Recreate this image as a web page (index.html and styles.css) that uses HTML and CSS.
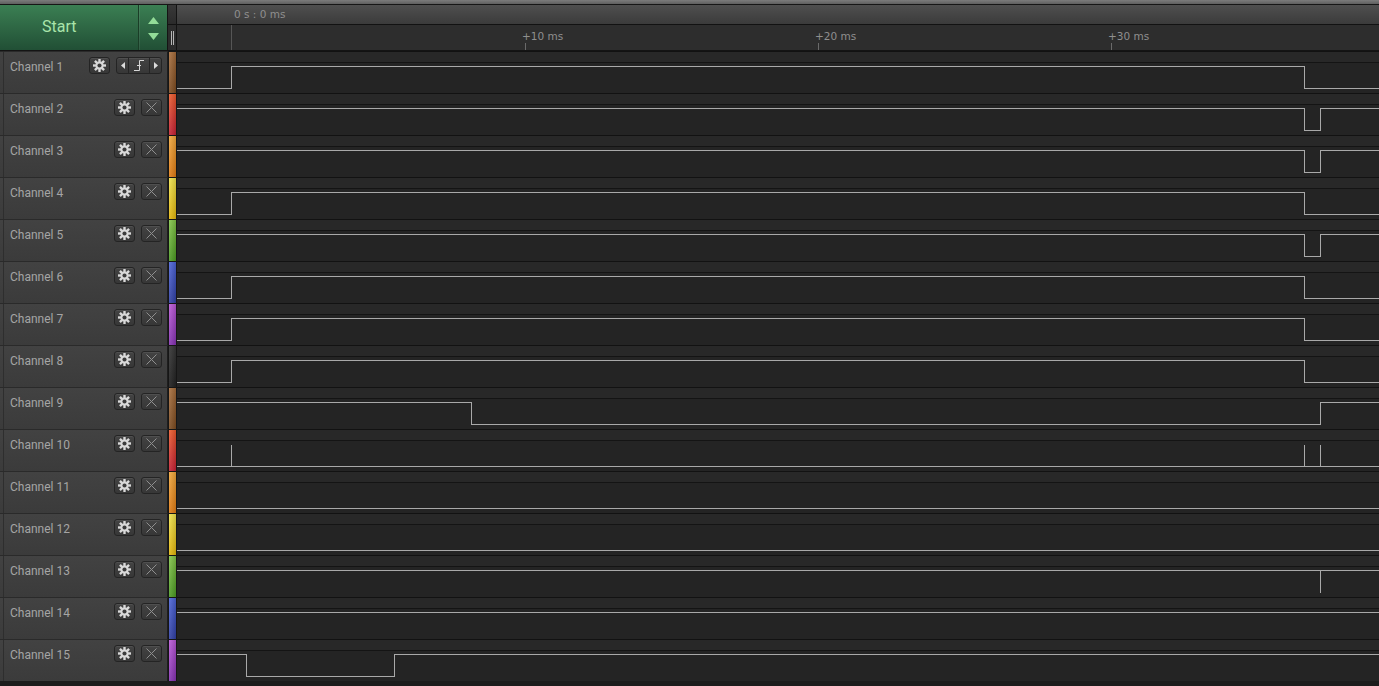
FILE: index.html
```html
<!DOCTYPE html>
<html>
<head>
<meta charset="utf-8">
<title>Logic</title>
<link rel="stylesheet" href="styles.css">
</head>
<body>
<div class="app">
  <div class="topbar"></div>
  <div class="header">
    <div class="start">
      <div class="start-label">Start</div>
      <div class="start-arrows">
        <svg width="11" height="7" viewBox="0 0 11 7"><path d="M5.5 0 L11 7 L0 7 Z" fill="#93dc98"/></svg>
        <svg width="11" height="7" viewBox="0 0 11 7"><path d="M0 0 L11 0 L5.5 7 Z" fill="#93dc98"/></svg>
      </div>
    </div>
    <div class="grip">
      <div class="grip-top"></div>
      <div class="grip-bottom"><span class="grip-bar"></span><span class="grip-bar"></span></div>
    </div>
    <div class="ruler">
      <div class="ruler-top"><span class="cursor-label" style="left:57px">0 s : 0 ms</span></div>
      <div class="ruler-bottom">
        <span class="cursor-line" style="left:54px"></span>
        <span class="tick-label" style="left:345px">+10 ms</span><span class="tick" style="left:348px"></span>
        <span class="tick-label" style="left:638px">+20 ms</span><span class="tick" style="left:641px"></span>
        <span class="tick-label" style="left:931px">+30 ms</span><span class="tick" style="left:934px"></span>
      </div>
    </div>
  </div>

  <div class="rows">
    <div class="row">
      <div class="label"><div class="label-inner">
        <span class="name">Channel 1</span>
        <span class="btn"><svg class="gear" width="13" height="13" viewBox="0 0 12 12"><use href="#gear"/></svg></span>
        <span class="nav">
          <span class="nav-l"><svg width="4" height="7" viewBox="0 0 4 7"><path d="M4 0 L0 3.5 L4 7 Z" fill="#dcdcdc"/></svg></span>
          <span class="nav-m"><svg width="12" height="11" viewBox="0 0 12 11"><path d="M1 10.5 H6.5 V0.5 H11 M4 5.5 H8" fill="none" stroke="#d6d6d6" stroke-width="1"/></svg></span>
          <span class="nav-r"><svg width="4" height="7" viewBox="0 0 4 7"><path d="M0 0 L4 3.5 L0 7 Z" fill="#dcdcdc"/></svg></span>
        </span>
      </div></div>
      <div class="strip c-brown"></div>
      <div class="wave"><div class="band"></div><svg class="trace" width="1202" height="29" viewBox="0 0 1202 29"><path d="M0 25.5 H54.5 V3.5 H1127.5 V25.5 H1202"/></svg></div>
    </div>

    <div class="row">
      <div class="label"><div class="label-inner"><span class="name">Channel 2</span><span class="btn"><svg class="gear" width="13" height="13" viewBox="0 0 12 12"><use href="#gear"/></svg></span><span class="btn"><svg width="11" height="11" viewBox="0 0 11 11"><path d="M0.5 0.5 L10.5 10.5 M10.5 0.5 L0.5 10.5" stroke="#8f8f8f" stroke-width="1"/></svg></span></div></div>
      <div class="strip c-red"></div>
      <div class="wave"><div class="band"></div><svg class="trace" width="1202" height="29" viewBox="0 0 1202 29"><path d="M0 3.5 H1127.5 V25.5 H1143.5 V3.5 H1202"/></svg></div>
    </div>

    <div class="row">
      <div class="label"><div class="label-inner"><span class="name">Channel 3</span><span class="btn"><svg class="gear" width="13" height="13" viewBox="0 0 12 12"><use href="#gear"/></svg></span><span class="btn"><svg width="11" height="11" viewBox="0 0 11 11"><path d="M0.5 0.5 L10.5 10.5 M10.5 0.5 L0.5 10.5" stroke="#8f8f8f" stroke-width="1"/></svg></span></div></div>
      <div class="strip c-orange"></div>
      <div class="wave"><div class="band"></div><svg class="trace" width="1202" height="29" viewBox="0 0 1202 29"><path d="M0 3.5 H1127.5 V25.5 H1143.5 V3.5 H1202"/></svg></div>
    </div>

    <div class="row">
      <div class="label"><div class="label-inner"><span class="name">Channel 4</span><span class="btn"><svg class="gear" width="13" height="13" viewBox="0 0 12 12"><use href="#gear"/></svg></span><span class="btn"><svg width="11" height="11" viewBox="0 0 11 11"><path d="M0.5 0.5 L10.5 10.5 M10.5 0.5 L0.5 10.5" stroke="#8f8f8f" stroke-width="1"/></svg></span></div></div>
      <div class="strip c-yellow"></div>
      <div class="wave"><div class="band"></div><svg class="trace" width="1202" height="29" viewBox="0 0 1202 29"><path d="M0 25.5 H54.5 V3.5 H1127.5 V25.5 H1202"/></svg></div>
    </div>

    <div class="row">
      <div class="label"><div class="label-inner"><span class="name">Channel 5</span><span class="btn"><svg class="gear" width="13" height="13" viewBox="0 0 12 12"><use href="#gear"/></svg></span><span class="btn"><svg width="11" height="11" viewBox="0 0 11 11"><path d="M0.5 0.5 L10.5 10.5 M10.5 0.5 L0.5 10.5" stroke="#8f8f8f" stroke-width="1"/></svg></span></div></div>
      <div class="strip c-green"></div>
      <div class="wave"><div class="band"></div><svg class="trace" width="1202" height="29" viewBox="0 0 1202 29"><path d="M0 3.5 H1127.5 V25.5 H1143.5 V3.5 H1202"/></svg></div>
    </div>

    <div class="row">
      <div class="label"><div class="label-inner"><span class="name">Channel 6</span><span class="btn"><svg class="gear" width="13" height="13" viewBox="0 0 12 12"><use href="#gear"/></svg></span><span class="btn"><svg width="11" height="11" viewBox="0 0 11 11"><path d="M0.5 0.5 L10.5 10.5 M10.5 0.5 L0.5 10.5" stroke="#8f8f8f" stroke-width="1"/></svg></span></div></div>
      <div class="strip c-blue"></div>
      <div class="wave"><div class="band"></div><svg class="trace" width="1202" height="29" viewBox="0 0 1202 29"><path d="M0 25.5 H54.5 V3.5 H1127.5 V25.5 H1202"/></svg></div>
    </div>

    <div class="row">
      <div class="label"><div class="label-inner"><span class="name">Channel 7</span><span class="btn"><svg class="gear" width="13" height="13" viewBox="0 0 12 12"><use href="#gear"/></svg></span><span class="btn"><svg width="11" height="11" viewBox="0 0 11 11"><path d="M0.5 0.5 L10.5 10.5 M10.5 0.5 L0.5 10.5" stroke="#8f8f8f" stroke-width="1"/></svg></span></div></div>
      <div class="strip c-purple"></div>
      <div class="wave"><div class="band"></div><svg class="trace" width="1202" height="29" viewBox="0 0 1202 29"><path d="M0 25.5 H54.5 V3.5 H1127.5 V25.5 H1202"/></svg></div>
    </div>

    <div class="row">
      <div class="label"><div class="label-inner"><span class="name">Channel 8</span><span class="btn"><svg class="gear" width="13" height="13" viewBox="0 0 12 12"><use href="#gear"/></svg></span><span class="btn"><svg width="11" height="11" viewBox="0 0 11 11"><path d="M0.5 0.5 L10.5 10.5 M10.5 0.5 L0.5 10.5" stroke="#8f8f8f" stroke-width="1"/></svg></span></div></div>
      <div class="strip c-black"></div>
      <div class="wave"><div class="band"></div><svg class="trace" width="1202" height="29" viewBox="0 0 1202 29"><path d="M0 25.5 H54.5 V3.5 H1127.5 V25.5 H1202"/></svg></div>
    </div>

    <div class="row">
      <div class="label"><div class="label-inner"><span class="name">Channel 9</span><span class="btn"><svg class="gear" width="13" height="13" viewBox="0 0 12 12"><use href="#gear"/></svg></span><span class="btn"><svg width="11" height="11" viewBox="0 0 11 11"><path d="M0.5 0.5 L10.5 10.5 M10.5 0.5 L0.5 10.5" stroke="#8f8f8f" stroke-width="1"/></svg></span></div></div>
      <div class="strip c-brown"></div>
      <div class="wave"><div class="band"></div><svg class="trace" width="1202" height="29" viewBox="0 0 1202 29"><path d="M0 3.5 H294.5 V25.5 H1143.5 V3.5 H1202"/></svg></div>
    </div>

    <div class="row">
      <div class="label"><div class="label-inner"><span class="name">Channel 10</span><span class="btn"><svg class="gear" width="13" height="13" viewBox="0 0 12 12"><use href="#gear"/></svg></span><span class="btn"><svg width="11" height="11" viewBox="0 0 11 11"><path d="M0.5 0.5 L10.5 10.5 M10.5 0.5 L0.5 10.5" stroke="#8f8f8f" stroke-width="1"/></svg></span></div></div>
      <div class="strip c-red"></div>
      <div class="wave"><div class="band"></div><svg class="trace" width="1202" height="29" viewBox="0 0 1202 29"><path d="M0 25.5 H1202 M54.5 25.5 V3.5 M1127.5 25.5 V3.5 M1143.5 25.5 V3.5"/></svg></div>
    </div>

    <div class="row">
      <div class="label"><div class="label-inner"><span class="name">Channel 11</span><span class="btn"><svg class="gear" width="13" height="13" viewBox="0 0 12 12"><use href="#gear"/></svg></span><span class="btn"><svg width="11" height="11" viewBox="0 0 11 11"><path d="M0.5 0.5 L10.5 10.5 M10.5 0.5 L0.5 10.5" stroke="#8f8f8f" stroke-width="1"/></svg></span></div></div>
      <div class="strip c-orange"></div>
      <div class="wave"><div class="band"></div><svg class="trace" width="1202" height="29" viewBox="0 0 1202 29"><path d="M0 25.5 H1202"/></svg></div>
    </div>

    <div class="row">
      <div class="label"><div class="label-inner"><span class="name">Channel 12</span><span class="btn"><svg class="gear" width="13" height="13" viewBox="0 0 12 12"><use href="#gear"/></svg></span><span class="btn"><svg width="11" height="11" viewBox="0 0 11 11"><path d="M0.5 0.5 L10.5 10.5 M10.5 0.5 L0.5 10.5" stroke="#8f8f8f" stroke-width="1"/></svg></span></div></div>
      <div class="strip c-yellow"></div>
      <div class="wave"><div class="band"></div><svg class="trace" width="1202" height="29" viewBox="0 0 1202 29"><path d="M0 25.5 H1202"/></svg></div>
    </div>

    <div class="row">
      <div class="label"><div class="label-inner"><span class="name">Channel 13</span><span class="btn"><svg class="gear" width="13" height="13" viewBox="0 0 12 12"><use href="#gear"/></svg></span><span class="btn"><svg width="11" height="11" viewBox="0 0 11 11"><path d="M0.5 0.5 L10.5 10.5 M10.5 0.5 L0.5 10.5" stroke="#8f8f8f" stroke-width="1"/></svg></span></div></div>
      <div class="strip c-green"></div>
      <div class="wave"><div class="band"></div><svg class="trace" width="1202" height="29" viewBox="0 0 1202 29"><path d="M0 3.5 H1202 M1143.5 3.5 V25.5"/></svg></div>
    </div>

    <div class="row">
      <div class="label"><div class="label-inner"><span class="name">Channel 14</span><span class="btn"><svg class="gear" width="13" height="13" viewBox="0 0 12 12"><use href="#gear"/></svg></span><span class="btn"><svg width="11" height="11" viewBox="0 0 11 11"><path d="M0.5 0.5 L10.5 10.5 M10.5 0.5 L0.5 10.5" stroke="#8f8f8f" stroke-width="1"/></svg></span></div></div>
      <div class="strip c-blue"></div>
      <div class="wave"><div class="band"></div><svg class="trace" width="1202" height="29" viewBox="0 0 1202 29"><path d="M0 3.5 H1202"/></svg></div>
    </div>

    <div class="row">
      <div class="label"><div class="label-inner"><span class="name">Channel 15</span><span class="btn"><svg class="gear" width="13" height="13" viewBox="0 0 12 12"><use href="#gear"/></svg></span><span class="btn"><svg width="11" height="11" viewBox="0 0 11 11"><path d="M0.5 0.5 L10.5 10.5 M10.5 0.5 L0.5 10.5" stroke="#8f8f8f" stroke-width="1"/></svg></span></div></div>
      <div class="strip c-purple"></div>
      <div class="wave"><div class="band"></div><svg class="trace" width="1202" height="29" viewBox="0 0 1202 29"><path d="M0 3.5 H69.5 V25.5 H217.5 V3.5 H1202"/></svg></div>
    </div>
  </div>
</div>

<svg width="0" height="0" class="defs">
  <defs>
    <g id="gear">
      <g fill="#d9d9d9">
        <rect x="4.9" y="0" width="2.2" height="3" />
        <rect x="4.9" y="0" width="2.2" height="3" transform="rotate(45 6 6)"/>
        <rect x="4.9" y="0" width="2.2" height="3" transform="rotate(90 6 6)"/>
        <rect x="4.9" y="0" width="2.2" height="3" transform="rotate(135 6 6)"/>
        <rect x="4.9" y="0" width="2.2" height="3" transform="rotate(180 6 6)"/>
        <rect x="4.9" y="0" width="2.2" height="3" transform="rotate(225 6 6)"/>
        <rect x="4.9" y="0" width="2.2" height="3" transform="rotate(270 6 6)"/>
        <rect x="4.9" y="0" width="2.2" height="3" transform="rotate(315 6 6)"/>
        <circle cx="6" cy="6" r="3.7"/>
      </g>
      <circle cx="6" cy="6" r="1.9" fill="#3b3b3b"/>
    </g>
  </defs>
</svg>
</body>
</html>
```

FILE: styles.css
```css
* { box-sizing: border-box; }
html, body { margin: 0; padding: 0; }
body {
  width: 1379px;
  height: 686px;
  overflow: hidden;
  background: #1c1c1c;
  font-family: Roboto, "Liberation Sans", sans-serif;
}
.defs { position: absolute; width: 0; height: 0; }

.app { display: flex; flex-direction: column; width: 1379px; height: 686px; }

.topbar {
  height: 5px;
  background: linear-gradient(#7c7c7c, #5f5f5f);
  border-bottom: 1px solid #161616;
}

.header { display: flex; height: 46px; border-bottom: 1px solid #141414; }

.start {
  width: 168px;
  display: flex;
  background: linear-gradient(#3b7f53, #214f35);
  border-right: 1px solid #141414;
}
.start-label {
  width: 139px;
  padding-left: 42px;
  padding-bottom: 2px;
  display: flex;
  align-items: center;
  font-size: 16px;
  color: #a9e4aa;
  border-right: 1px solid #1a3d27;
}
.start-arrows {
  flex: 1;
  display: flex;
  flex-direction: column;
  align-items: center;
  justify-content: center;
  gap: 9px;
  padding-top: 1px;
  box-shadow: inset 1px 0 0 rgba(255,255,255,0.08);
}
.start-arrows svg { display: block; }

.grip {
  width: 9px;
  display: flex;
  flex-direction: column;
  background: #262626;
  border-right: 1px solid #131313;
}
.grip-top { height: 20px; background: linear-gradient(#383838, #2b2b2b); border-bottom: 1px solid #131313; }
.grip-bottom { flex: 1; display: flex; justify-content: center; align-items: center; gap: 1px; background: #2c2c2c; }
.grip-bar { width: 1px; height: 14px; background: #b5b5b5; }

.ruler { flex: 1; display: flex; flex-direction: column; }
.ruler-top {
  position: relative;
  height: 20px;
  background: linear-gradient(#4f4f4f, #3b3b3b);
  border-bottom: 1px solid #121212;
}
.ruler-bottom { position: relative; flex: 1; background: #2d2d2d; }
.cursor-label, .tick-label {
  position: absolute;
  font-family: "DejaVu Sans", sans-serif;
  font-size: 10.5px;
  color: #8f8f8f;
  white-space: nowrap;
}
.cursor-label { top: 3px; }
.tick-label { top: 5px; }
.cursor-line { position: absolute; top: 0; bottom: 0; width: 1px; background: #565656; }
.tick { position: absolute; bottom: 0; height: 7px; width: 1px; background: #6a6a6a; }

.rows { display: flex; flex-direction: column; }
.row { display: flex; height: 42px; }

.label {
  width: 168px;
  padding-left: 3px;
  background: linear-gradient(#424242, #3b3b3b);
  border-top: 1px solid #2a2a2a;
  border-right: 1px solid #1e1e1e;
  display: flex;
}
.label-inner {
  flex: 1;
  display: flex;
  align-items: flex-start;
  padding: 5px 5px 0 6px;
  border-left: 1px solid #2e2e2e;
}
.name { flex: 1; font-size: 12px; line-height: 17px; margin-top: 2px; color: #a5a5a5; }

.btn {
  width: 21px;
  height: 17px;
  margin-left: 6px;
  display: flex;
  align-items: center;
  justify-content: center;
  border: 1px solid #242424;
  border-radius: 3px;
  background: linear-gradient(#434343, #373737);
  box-shadow: inset 0 1px 0 rgba(255,255,255,0.07);
}
.btn svg { display: block; }

.nav {
  width: 46px;
  height: 17px;
  margin-left: 6px;
  display: flex;
  border: 1px solid #242424;
  border-radius: 3px;
  background: linear-gradient(#434343, #373737);
  box-shadow: inset 0 1px 0 rgba(255,255,255,0.07);
}
.nav-l, .nav-r { width: 11px; display: flex; align-items: center; justify-content: center; }
.nav-m { flex: 1; display: flex; align-items: center; justify-content: center; border-left: 1px solid #252525; border-right: 1px solid #252525; }
.nav svg { display: block; }

.strip {
  width: 9px;
  border-left: 1px solid #161616;
  border-right: 1px solid #161616;
  border-top: 1px solid #161616;
}
.c-brown  { background: linear-gradient(to right, rgba(255,255,255,0.12), rgba(0,0,0,0.15)), linear-gradient(#a66c3a, #7b4a1f); }
.c-red    { background: linear-gradient(to right, rgba(255,255,255,0.12), rgba(0,0,0,0.15)), linear-gradient(#ec5a2c, #c41f33); }
.c-orange { background: linear-gradient(to right, rgba(255,255,255,0.12), rgba(0,0,0,0.15)), linear-gradient(#f1a73a, #e07a12); }
.c-yellow { background: linear-gradient(to right, rgba(255,255,255,0.12), rgba(0,0,0,0.15)), linear-gradient(#f0e24a, #e2b50a); }
.c-green  { background: linear-gradient(to right, rgba(255,255,255,0.12), rgba(0,0,0,0.15)), linear-gradient(#82c447, #4b9a22); }
.c-blue   { background: linear-gradient(to right, rgba(255,255,255,0.12), rgba(0,0,0,0.15)), linear-gradient(#4b63d6, #2f3ea3); }
.c-purple { background: linear-gradient(to right, rgba(255,255,255,0.12), rgba(0,0,0,0.15)), linear-gradient(#b957d6, #8531b2); }
.c-black  { background: linear-gradient(to right, rgba(255,255,255,0.08), rgba(0,0,0,0.15)), linear-gradient(#383838, #222222); }

.wave {
  flex: 1;
  display: flex;
  flex-direction: column;
  border-top: 1px solid #121212;
  background: #242424;
}
.band { height: 11px; background: #282828; border-bottom: 1px solid #141414; }
.trace { display: block; shape-rendering: crispEdges; }
.trace path { fill: none; stroke: #a9a9a9; stroke-width: 1; }
```
